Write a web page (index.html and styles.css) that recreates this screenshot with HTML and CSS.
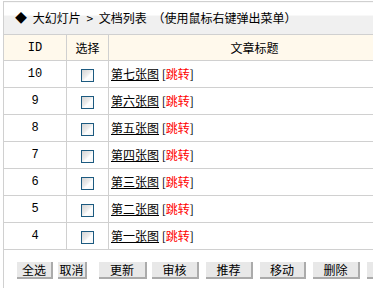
FILE: index.html
```html
<!DOCTYPE html>
<html lang="zh-CN">
<head>
<meta charset="utf-8">
<title>文档列表</title>
<link rel="stylesheet" href="styles.css">
</head>
<body>
<div class="wrap">
<table class="list">
  <colgroup>
    <col class="c-id">
    <col class="c-sel">
    <col class="c-title">
  </colgroup>
  <tr class="bar">
    <td colspan="3"><span class="dia">◆</span> 大幻灯片 &gt; 文档列表 （使用鼠标右键弹出菜单）</td>
  </tr>
  <tr class="head">
    <td class="mono">ID</td>
    <td>选择</td>
    <td>文章标题</td>
  </tr>
  <tr><td class="num">10</td><td class="sel"><span class="cb"></span></td><td class="ttl"><a href="#">第七张图</a> [<span class="red">跳转</span>]</td></tr>
  <tr><td class="num">9</td><td class="sel"><span class="cb"></span></td><td class="ttl"><a href="#">第六张图</a> [<span class="red">跳转</span>]</td></tr>
  <tr><td class="num">8</td><td class="sel"><span class="cb"></span></td><td class="ttl"><a href="#">第五张图</a> [<span class="red">跳转</span>]</td></tr>
  <tr><td class="num">7</td><td class="sel"><span class="cb"></span></td><td class="ttl"><a href="#">第四张图</a> [<span class="red">跳转</span>]</td></tr>
  <tr><td class="num">6</td><td class="sel"><span class="cb"></span></td><td class="ttl"><a href="#">第三张图</a> [<span class="red">跳转</span>]</td></tr>
  <tr><td class="num">5</td><td class="sel"><span class="cb"></span></td><td class="ttl"><a href="#">第二张图</a> [<span class="red">跳转</span>]</td></tr>
  <tr><td class="num">4</td><td class="sel"><span class="cb"></span></td><td class="ttl"><a href="#">第一张图</a> [<span class="red">跳转</span>]</td></tr>
  <tr class="foot">
    <td colspan="3">
      <div class="btns">
        <a href="#" class="btn b-all">全选</a>
        <a href="#" class="btn b-cancel">取消</a>
        <a href="#" class="btn b-upd">更新</a>
        <a href="#" class="btn b-w">审核</a>
        <a href="#" class="btn b-w">推荐</a>
        <a href="#" class="btn b-mv">移动</a>
        <a href="#" class="btn b-w">删除</a>
        <a href="#" class="btn b-w">&nbsp;</a>
      </div>
    </td>
  </tr>
</table>
</div>
</body>
</html>
```
FILE: styles.css
```css
html, body {
  margin: 0;
  padding: 0;
  background: #fff;
  overflow: hidden;
}
body {
  font-family: "Noto Sans CJK SC", "Noto Sans", sans-serif;
  font-size: 12px;
  color: #000;
}
.wrap {
  padding: 1px 0 0 3px;
  width: 420px;
}
.list {
  border-collapse: collapse;
  width: 398px;
  table-layout: fixed;
}
.list td {
  border: 1px solid #d0d0d0;
  padding: 0;
  line-height: 14px;
}
.c-id { width: 63px; }
.c-sel { width: 42px; }
.bar td {
  height: 32px;
  padding-left: 11px;
  word-spacing: 3px;
  background: linear-gradient(#ffffff 0, #ffffff 13px, #f0f0f0 13px, #f0f0f0 100%);
  white-space: nowrap;
}
.dia {
  font-size: 12px;
}
.head td {
  height: 25px;
  background: #fff9ec;
  text-align: center;
}
.list tr td.num,
.list tr td.sel {
  height: 26px;
  text-align: center;
}
.num,
.mono {
  font-family: "Liberation Mono", monospace;
  font-size: 12px;
}
.cb {
  display: inline-block;
  width: 11px;
  height: 11px;
  border: 1px solid #1c5a80;
  background: linear-gradient(135deg, #d4d4d4 0%, #ececec 45%, #ffffff 60%, #f4f4f4 100%);
  vertical-align: middle;
}
.ttl {
  padding-left: 2px !important;
  white-space: nowrap;
}
.ttl a {
  color: #000;
  text-decoration: underline;
}
.red { color: #f00; }
.foot td {
  height: 40px;
  vertical-align: top;
  border-bottom: none;
}
.btns {
  display: flex;
  padding: 12px 0 0 13px;
}
.btn {
  display: block;
  height: 15px;
  line-height: 15px;
  text-align: center;
  color: #000;
  text-decoration: none;
  background: #e8e8e8;
  border-right: 2px solid #ababab;
  border-bottom: 2px solid #ababab;
  flex: none;
}
.b-all { width: 34px; margin-right: 5px; }
.b-cancel { width: 27px; margin-right: 12px; }
.b-upd { width: 46px; margin-right: 5px; }
.b-w { width: 45px; margin-right: 7px; }
.b-mv { width: 44px; margin-right: 7px; }
```
